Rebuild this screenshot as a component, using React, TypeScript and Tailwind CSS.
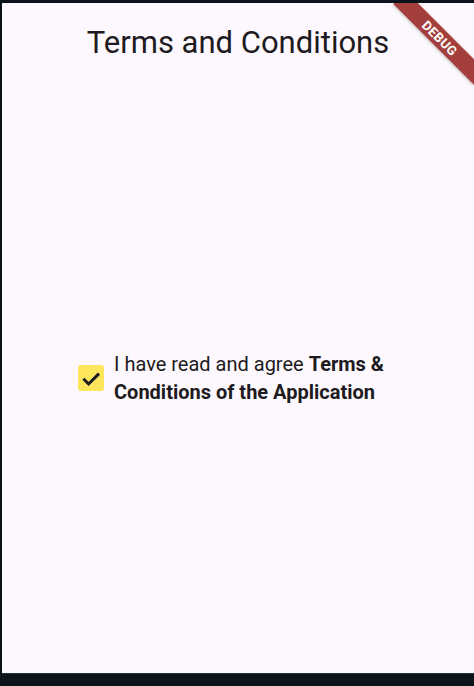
import React from "react";

export default function App() {
  return (
    <div
      className="w-[474px] h-[686px] bg-[#0d131a] pt-[3px] pl-[2px] pb-[12px] flex flex-col"
      style={{ fontFamily: "Roboto, 'Noto Sans', sans-serif" }}
    >
      <div className="relative flex-1 flex flex-col bg-[#fdf8fd] overflow-hidden border-b border-[#2a3038]">
        <div className="h-[79px] flex items-center justify-center shrink-0">
          <h1 className="text-[31px] leading-[40px] text-[#1d1b20] font-normal">Terms and Conditions</h1>
        </div>
        <div className="flex-1 flex items-center pl-[76px]">
          <div className="flex items-center">
            <div className="w-[26px] h-[26px] rounded-[3px] bg-[#fde55c] flex items-center justify-center shrink-0">
              <svg width="26" height="26" viewBox="0 0 26 26">
                <path d="M5.4 13.8 L10.6 19 L21 8.6" fill="none" stroke="#1d1b20" strokeWidth="3" strokeLinecap="butt" strokeLinejoin="miter" />
              </svg>
            </div>
            <p className="ml-[10px] w-[290px] text-[20px] leading-[28px] text-[#1d1b20]">
              I have read and agree <span className="font-bold">Terms &amp; Conditions of the Application</span>
            </p>
          </div>
        </div>
        <div className="absolute top-[26px] right-[-23px] w-[114px] h-[18px] rotate-45 bg-[#a43f3d] flex items-center justify-center shadow-[0_1px_3px_rgba(0,0,0,0.25)]">
          <span className="text-white text-[13px] font-bold leading-none tracking-[0.4px]">DEBUG</span>
        </div>
      </div>
    </div>
  );
}
